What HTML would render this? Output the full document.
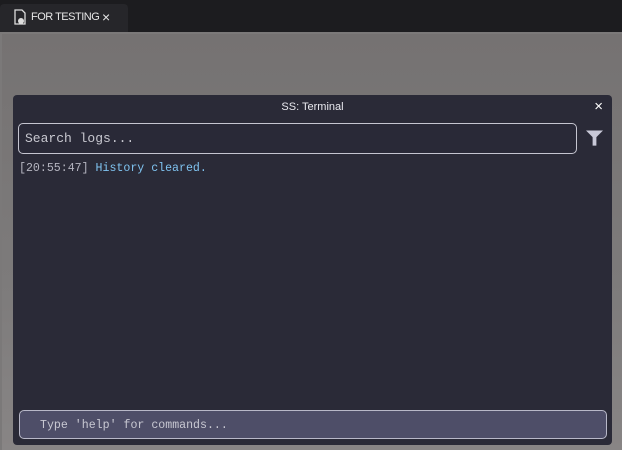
<!DOCTYPE html>
<html><head><style>
body{margin:0;width:622px;height:450px;overflow:hidden;background:#7b7979;position:relative;font-family:"Liberation Sans",sans-serif}
.top{position:absolute;left:0;top:0;width:622px;height:32px;background:#1c1c1f}
.tab{position:absolute;left:0;top:4px;width:128px;height:28px;background:#26262a;border-radius:4px 4px 0 0;color:#e6e6e6;font-size:11px}
.view{position:absolute;left:2px;top:34px;width:620px;height:416px;background:linear-gradient(#757272,#7d7b7b 60%,#888585)}
.win{position:absolute;left:13px;top:95px;width:599px;height:350px;background:#2a2a37;border-radius:4px}
.title{position:absolute;left:0;top:1px;width:100%;height:22px;text-align:center;line-height:22px;color:#e8e8ee;font-size:11px}
.search{position:absolute;left:5px;top:28px;width:551px;height:29px;border:1.5px solid #c5c5d0;border-radius:5px;background:#292937;color:#c8c8d0;font-family:"Liberation Mono",monospace;font-size:13px;line-height:29px;padding-left:6px;box-sizing:content-box}
.log{position:absolute;left:6px;top:67px;font-family:"Liberation Mono",monospace;font-size:11.6px;color:#b5b5c0}
.log span{color:#7fc3f0}
.inp{position:absolute;left:6px;top:315px;height:29px;border:1.5px solid #b8b8c8;border-radius:5px;background:#4e4e68;color:#c8c8d2;font-family:"Liberation Mono",monospace;font-size:11.6px;line-height:29px;padding-left:20px;box-sizing:border-box;width:588px}
</style></head><body>
<div class="top"></div>
<div class="tab">
<svg style="position:absolute;left:13px;top:5px" width="14" height="16" viewBox="0 0 14 16"><path d="M2 1h7l3 3v11H2z" fill="none" stroke="#ddd" stroke-width="1.3"/><circle cx="8" cy="12" r="3" fill="#ddd"/></svg>
<span style="position:absolute;left:31px;top:7px;letter-spacing:-0.5px">FOR TESTING</span>
<span style="position:absolute;left:102px;top:5px;font-size:14px">×</span>
</div>
<div class="view"></div>
<div class="win">
<div class="title">SS: Terminal</div>
<div style="position:absolute;right:9px;top:3px;color:#fff;font-size:15px">×</div>
<div class="search">Search logs...</div>
<svg style="position:absolute;left:573px;top:35px" width="17" height="17" viewBox="0 0 18 17"><path d="M0 0h18l-7 7v9h-4V7z" fill="#c9c9d8"/></svg>
<div class="log">[20:55:47] <span>History cleared.</span></div>
<div class="inp">Type 'help' for commands...</div>
</div>
</body></html>
